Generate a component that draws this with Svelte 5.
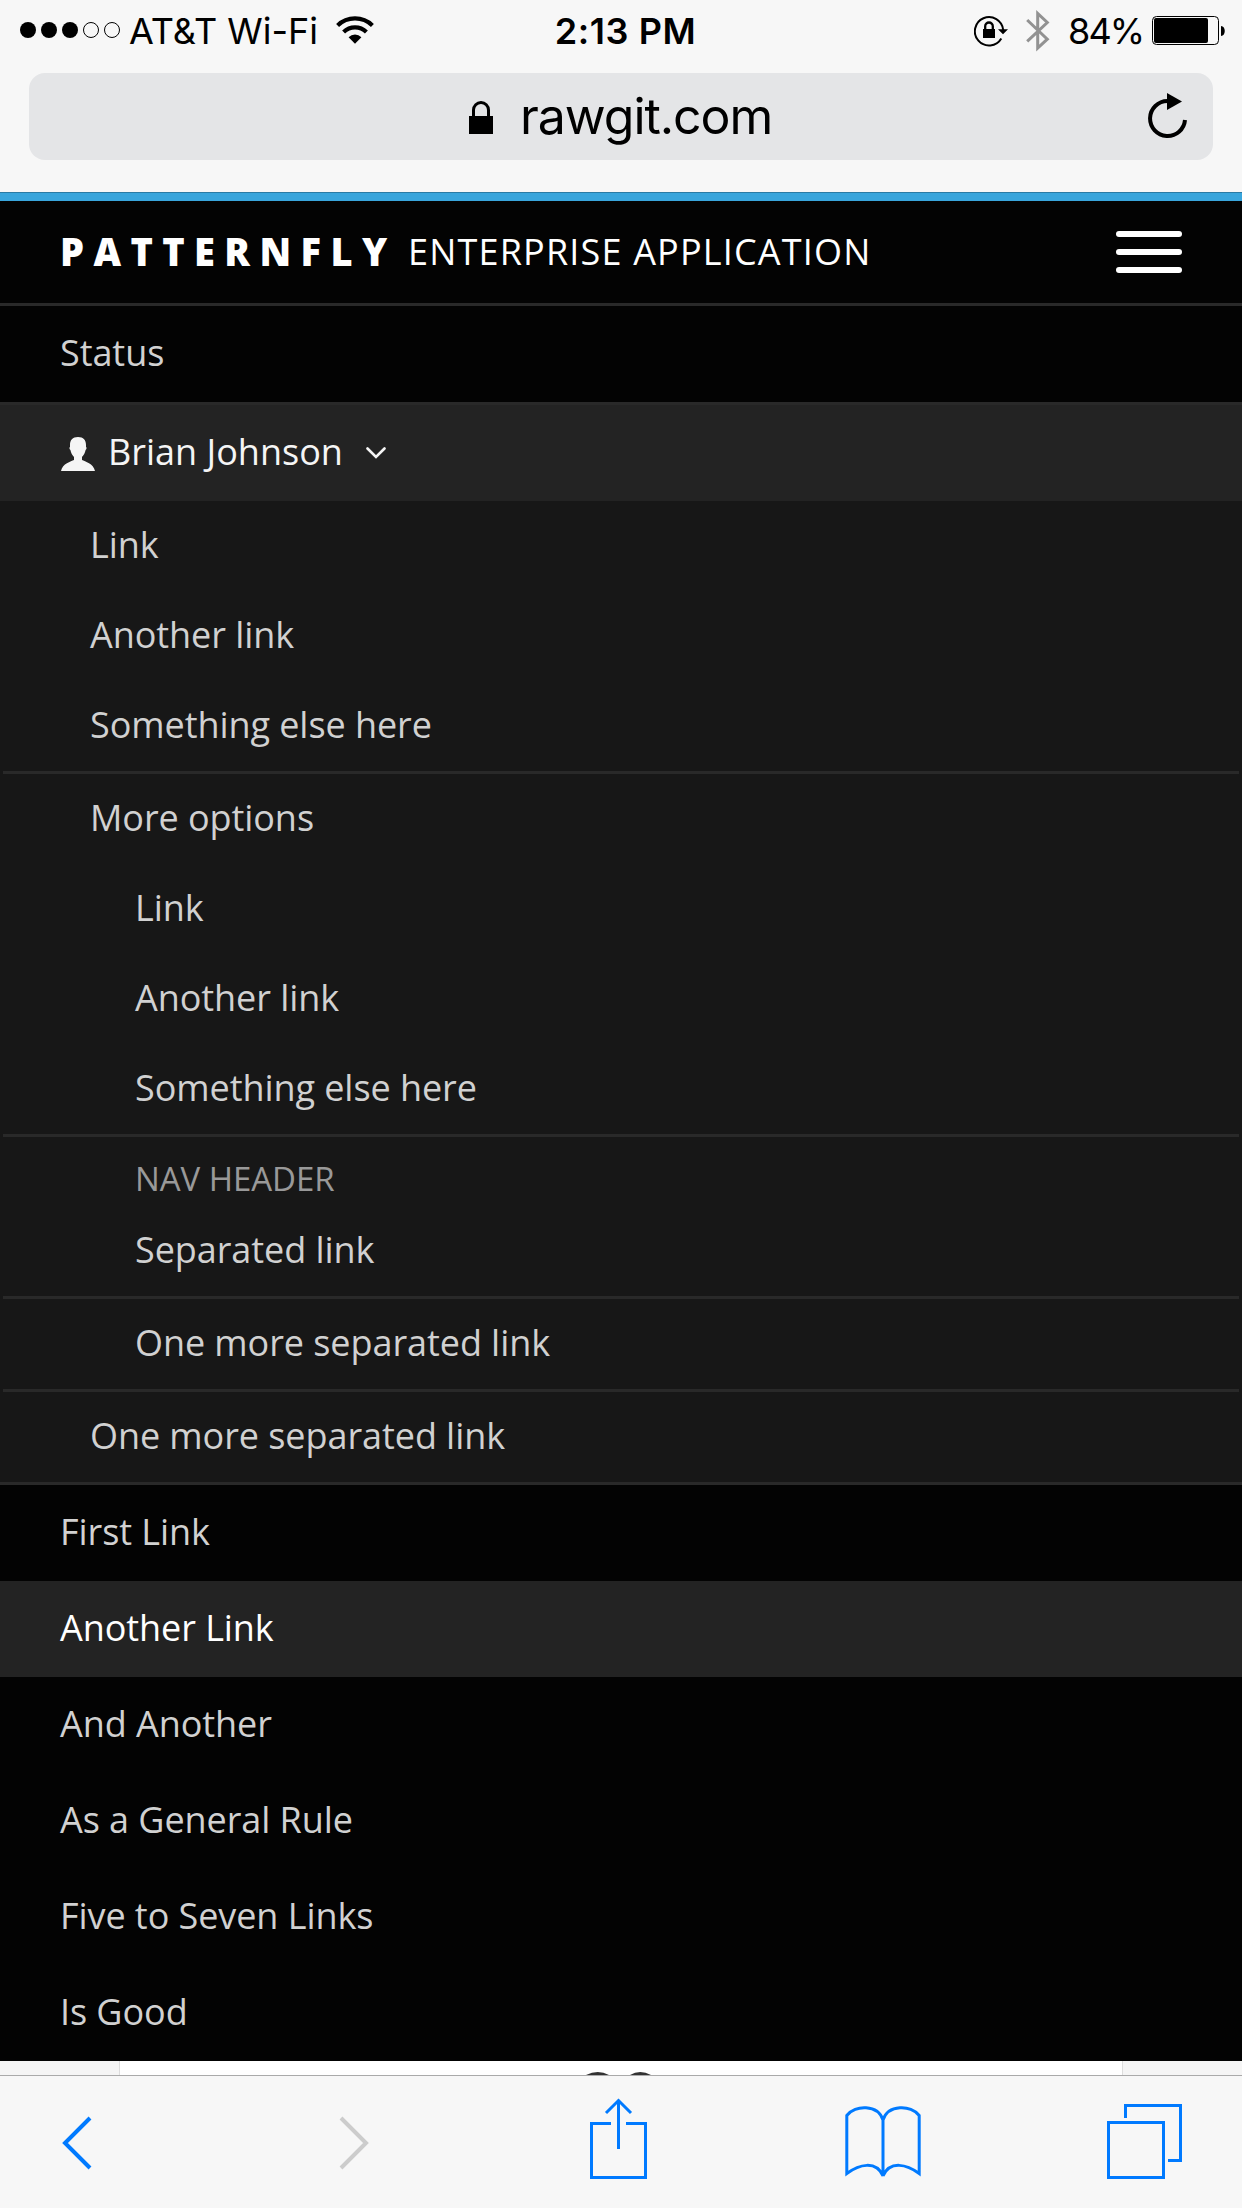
<script>
  const submenu = [
    { label: 'Link' },
    { label: 'Another link' },
    { label: 'Something else here' },
    { divider: true },
    { label: 'More options' },
    { label: 'Link', nested: true },
    { label: 'Another link', nested: true },
    { label: 'Something else here', nested: true },
    { divider: true },
    { label: 'NAV HEADER', header: true },
    { label: 'Separated link', nested: true },
    { divider: true },
    { label: 'One more separated link', nested: true },
    { divider: true },
    { label: 'One more separated link' }
  ];
  const primary = ['First Link', 'Another Link', 'And Another', 'As a General Rule', 'Five to Seven Links', 'Is Good'];
  const active = 'Another Link';
</script>

<div class="screen">
  <header class="chrome">
    <div class="status">
      <div class="side">
        <svg class="signal" width="102" height="18" viewBox="0 0 102 18">
          <circle cx="8" cy="9" r="8" /><circle cx="29" cy="9" r="8" /><circle cx="50" cy="9" r="8" />
          <circle class="empty" cx="71" cy="9" r="7.5" /><circle class="empty" cx="92" cy="9" r="7.5" />
        </svg>
        <span class="carrier">AT&amp;T Wi-Fi</span>
        <svg class="wifi" width="38" height="28" viewBox="0 0 38 28">
          <path class="arc" d="M1.6 9.4a25 25 0 0 1 34.8 0M7.6 16a16.4 16.4 0 0 1 22.8 0" />
          <path d="M12.6 21.2a9.2 9.2 0 0 1 12.8 0L19 27.7z" />
        </svg>
      </div>
      <span class="clock">2:13 PM</span>
      <div class="side end">
        <svg class="rotation" width="34" height="32" viewBox="0 0 34 32">
          <path class="ring" d="M27.3 23.5A14.2 14.2 0 1 1 29.2 15" />
          <path d="M24 14.3h10l-5 5zM9 14h12v9H9z" />
          <path class="shackle" d="M11.2 14.5v-3.2a3.8 3.8 0 0 1 7.6 0v3.2" />
        </svg>
        <svg class="bluetooth" width="24" height="42" viewBox="0 0 24 42">
          <path d="M1.2 10 21.3 29.2 11.7 38V3.5l9.6 9L1.2 31.3" />
        </svg>
        <span class="percent">84%</span>
        <svg class="battery" width="74" height="30" viewBox="0 0 74 30">
          <rect class="shell" x="0.5" y="0.5" width="66" height="28" rx="4" />
          <rect x="2" y="2" width="54" height="25" rx="2" />
          <path d="M69 10c5 0 5 10 0 10z" />
        </svg>
      </div>
    </div>
    <div class="address">
      <svg class="lock" width="24" height="33" viewBox="0 0 24 33">
        <path d="M0 15h24v18H0z" />
        <path class="bow" d="M4.500 16V9a7.500 7.500 0 0 1 15 0v7" />
      </svg>
      <span class="host">rawgit.com</span>
      <svg class="reload" width="40" height="46" viewBox="0 0 40 46">
        <path class="ring" d="M37 27A17.5 17.5 0 1 1 19.5 8" />
        <path d="M19 0v17l15-8.5z" />
      </svg>
    </div>
  </header>

  <nav>
    <div class="brand">
      <div class="name"><strong>PATTERNFLY</strong><span>ENTERPRISE APPLICATION</span></div>
      <button class="toggle" aria-label="Toggle navigation"><i></i><i></i><i></i></button>
    </div>
    <a class="row utility">Status</a>
    <a class="row utility open">
      <svg class="user" width="34" height="34" viewBox="0 0 34 34">
        <path d="M17 0c5.500 0 8 3 8 8v2c1 .2.600 2.400-.4 3-.6 3-1.900 5-3.600 7v3c3 1.500 11.500 3.500 13 11H0c1.500-7.500 10-9.500 13-11v-3c-1.700-2-3-4-3.600-7-1-.6-1.400-2.800-.4-3V8c0-5 2.500-8 8-8z" />
      </svg>
      <span>Brian Johnson</span>
      <svg class="caret" width="20" height="12" viewBox="0 0 20 12"><path d="M1.500 1.500 10 10l8.500-8.500" /></svg>
    </a>
    <div class="submenu">
      {#each submenu as item}
        {#if item.divider}
          <hr />
        {:else}
          <a class:nested={item.nested} class:heading={item.header}>{item.label}</a>
        {/if}
      {/each}
    </div>
    {#each primary as label}
      <a class="row" class:active={label === active}>{label}</a>
    {/each}
  </nav>

  <div class="page">
    <div class="card">
      <svg width="66" height="3" viewBox="0 0 66 3"><path d="M0 3Q12-3 23 3ZM44 3Q54-3 65 3Z" /></svg>
    </div>
  </div>

  <footer class="toolbar">
    <svg class="back" width="30" height="54" viewBox="0 0 30 54"><path d="M28 2 3 27l25 25" /></svg>
    <svg class="forward" width="30" height="54" viewBox="0 0 30 54"><path d="m2 2 25 25L2 52" /></svg>
    <svg class="share" width="57" height="81" viewBox="0 0 57 81">
      <path d="M21 25.500H1.500v54h54v-54H36M28.500 51V3M16 15 28.500 2.500 41 15" />
    </svg>
    <svg class="book" width="76" height="72" viewBox="0 0 76 72">
      <path d="M38 70V14C33-1.500 10-1.500 1.800 9.500V67.500C14 58.500 31 54 38 70ZM38 14C43-1.500 66-1.500 74.200 9.500V67.500C62 58.500 45 54 38 70" />
    </svg>
    <svg class="tabs" width="75" height="75" viewBox="0 0 75 75">
      <path d="M1.500 18.500h55v55h-55zM18.500 14V1.500h55v55H61" />
    </svg>
  </footer>
</div>

<style>
  :global(body) { margin: 0; background: #f7f7f7; }
  .screen { width: 1242px; height: 2208px; overflow: hidden; display: flex; flex-direction: column; font-family: "Open Sans", sans-serif; }
  svg { display: block; flex: none; }
  .chrome { height: 192px; box-sizing: border-box; background: #f7f7f7; font-family: Inter, sans-serif; color: #000; }
  .status { height: 73px; box-sizing: border-box; padding: 0 16px 11px 20px; display: grid; grid-template-columns: 1fr auto 1fr; align-items: center; font-size: 36px; line-height: 62px; }
  .side { display: flex; align-items: center; }
  .end { justify-content: flex-end; }
  .signal { margin-top: -2px; }
  .empty { fill: none; stroke: #000; stroke-width: 1; }
  .carrier { margin-left: 7px; }
  .wifi { margin: -3px 0 0 18px; }
  .arc { fill: none; stroke: #000; stroke-width: 4.200; }
  .clock { font-weight: 600; letter-spacing: 0.600px; padding-left: 5px; }
  .rotation { margin-right: 18px; }
  .ring, .shackle { fill: none; stroke: #000; stroke-width: 2; }
  .shackle { stroke-width: 2.300; }
  .bluetooth { margin-right: 18px; }
  .bluetooth path { fill: none; stroke: #929292; stroke-width: 3; }
  .percent { margin-right: 9px; letter-spacing: -2px; }
  .shell { fill: none; stroke: #000; }
  .address { height: 87px; margin: 0 29px; border-radius: 16px; background: #e4e5e7; display: flex; align-items: center; box-sizing: border-box; padding: 0 25px 0 440px; }
  .lock { margin-top: 2px; }
  .bow { fill: none; stroke: #000; stroke-width: 3; }
  .host { flex: 1; margin: -2px 0 0 27px; font-size: 50px; line-height: 80px; letter-spacing: -1.050px; }
  .reload { margin-top: -2px; }
  .reload .ring { stroke-width: 4; }
  nav { background: #030303; border-top: 1px solid #2b7ba5; }
  .brand { height: 102px; border-top: 8px solid #39a5dc; display: flex; align-items: center; justify-content: space-between; padding: 0 60px; color: #fff; }
  .name { display: flex; align-items: flex-start; font-size: 36px; line-height: 100px; white-space: nowrap; }
  .name strong { width: 348px; margin-top: -1px; font-size: 38px; font-weight: 800; letter-spacing: 9.400px; }
  .name span { letter-spacing: 1.180px; }
  .toggle { border: 0; background: none; padding: 0; width: 66px; display: grid; gap: 12px; }
  .toggle i { height: 6px; border-radius: 3px; background: #fff; }
  .row { height: 96px; box-sizing: border-box; padding: 0 60px 3px; display: flex; align-items: center; font-size: 36px; letter-spacing: -0.070px; color: #d1d1d1; }
  .utility { height: 99px; border-top: 3px solid #292929; }
  .open { background: #232323; color: #f5f5f5; letter-spacing: 0; }
  .user { margin: 4px 13px 0 1px; fill: #f5f5f5; }
  .caret { margin: 3px 0 0 23px; fill: none; stroke: #f5f5f5; stroke-width: 2.600; stroke-linecap: round; }
  .submenu { background: #171717; border-bottom: 3px solid #292929; }
  .submenu a { height: 90px; box-sizing: border-box; padding: 0 0 3px 90px; display: flex; align-items: center; font-size: 36px; letter-spacing: -0.070px; color: #d1d1d1; }
  .submenu .nested { padding-left: 135px; }
  .submenu .heading { height: 69px; padding: 14px 0 0 135px; font-size: 33px; color: #999; }
  hr { height: 3px; margin: 0 3px; border: 0; background: #292929; }
  .row.active { background: #232323; color: #fff; }
  .page { height: 14px; background: #f5f5f5; border-bottom: 1px solid #aaa; display: flex; justify-content: center; }
  .card { width: 1002px; background: #fff; border: solid #ddd; border-width: 0 1px; display: flex; align-items: flex-end; }
  .card svg { margin-left: 466px; fill: #333; }
  .toolbar { height: 132px; box-sizing: border-box; padding: 0 60px 0 62px; background: #f7f7f7; display: flex; align-items: flex-start; }
  .toolbar path { fill: none; stroke: #007aff; stroke-width: 3; }
  .toolbar .back path { stroke-width: 4; }
  .toolbar .forward path { stroke: #ccc; stroke-width: 4; }
  .back, .forward { margin-top: 40px; }
  .forward { margin-left: 247px; }
  .share { margin: 22px 0 0 221px; }
  .book { margin: 30px 0 0 198px; }
  .tabs { margin: 28px 0 0 186px; }
</style>
